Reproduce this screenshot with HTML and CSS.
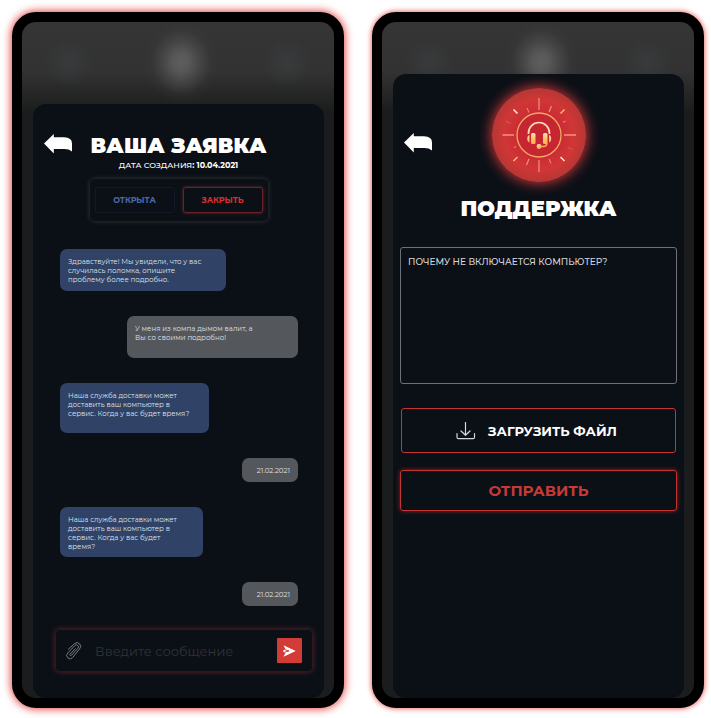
FILE: index.html
```html
<!DOCTYPE html>
<html lang="ru">
<head>
<meta charset="utf-8">
<meta name="viewport" content="width=device-width, initial-scale=1">
<title>Поддержка</title>
<link rel="stylesheet" href="styles.css">
</head>
<body>
<main class="screens">
  <section class="phone phone--ticket">
    <div class="sheet">
      <header class="head">
        <button class="back" type="button" aria-label="Назад">
          <svg class="back-icon" viewBox="0 0 28 20"><path d="M0 9.500 9.800 0v3.300h10.200q8 .2 8 6.200v8q-3-2.400-7.500-2.400H9.800v4.400z"/></svg>
        </button>
        <h1 class="title">ВАША ЗАЯВКА</h1>
      </header>
      <p class="created">ДАТА СОЗДАНИЯ<b>: 10.04.2021</b></p>
      <div class="status">
        <button class="status-button status-button--open" type="button">ОТКРЫТА</button>
        <button class="status-button status-button--close" type="button">ЗАКРЫТЬ</button>
      </div>
      <div class="chat">
        <p class="bubble bubble--greeting">Здравствуйте! Мы увидели, что у вас<br>случилась поломка, опишите<br>проблему более подробно.</p>
        <p class="bubble bubble--own">У меня из компа дымом валит, а<br>Вы со своими подробно!</p>
        <p class="bubble bubble--offer">Наша служба доставки может<br>доставить ваш компьютер в<br>сервис. Когда у вас будет время?</p>
        <p class="bubble bubble--own bubble--date">21.02.2021</p>
        <p class="bubble bubble--repeat">Наша служба доставки может<br>доставить ваш компьютер в<br>сервис. Когда у вас будет<br>время?</p>
        <p class="bubble bubble--own bubble--date">21.02.2021</p>
      </div>
      <form class="composer">
        <button class="attach" type="button" aria-label="Прикрепить файл">
          <svg class="attach-icon" viewBox="0 0 16 18"><path d="M2 7.500 8.600 1.700a3.600 3.600 0 0 1 5.200.3 3.700 3.700 0 0 1-.3 5L6.600 15.600a3.300 3.300 0 0 1-4.800.2 3.300 3.300 0 0 1-.1-4.700l7.200-7.600a2 2 0 0 1 3 2.700l-6.400 7.100a.9.900 0 0 1-1.400-1.200L9.400 6.500"/></svg>
        </button>
        <input class="composer-input" type="text" aria-label="Сообщение" placeholder="Введите сообщение">
        <button class="send" type="submit" aria-label="Отправить">
          <svg class="send-icon" viewBox="0 0 13 12"><path class="send-plane" d="M.5.300 12.700 6 .5 11.700 2.700 7.500.4 7V5l2.300-.5z"/><path class="send-fold" d="m2.200 4.900 3.800 1-3.800 1"/></svg>
        </button>
      </form>
    </div>
  </section>

  <section class="phone phone--support">
    <div class="sheet">
      <header class="head head--logo">
        <button class="back" type="button" aria-label="Назад">
          <svg class="back-icon" viewBox="0 0 28 20"><path d="M0 9.500 9.800 0v3.300h10.200q8 .2 8 6.200v8q-3-2.400-7.500-2.400H9.800v4.400z"/></svg>
        </button>
        <div class="badge">
          <svg class="badge-icon" viewBox="0 0 94 94">
            <defs>
              <linearGradient id="gold" x1="0" y1="0" x2="0" y2="1"><stop offset="0" stop-color="#ffe3bd"/><stop offset=".5" stop-color="#ffc36e"/><stop offset="1" stop-color="#ffb052"/></linearGradient>
            </defs>
            <circle cx="47" cy="47" r="22" fill="#c52632" stroke="#f5a861" stroke-width="1.300"/>
            <g fill="none" stroke="#f5b398" stroke-width="1.200">
              <path d="M47 10v12M47 72v12" stroke="#ee9282"/>
              <path d="M10.500 47H22M72 47h12" stroke="#ffc8a0"/>
              <path d="m21.500 21.500 4 4M68.500 69l4 4" stroke="#ffe6cc" stroke-width="1.600"/>
              <path d="m72.500 21.500-4 4M25.500 69l-4 4" stroke="#ffc06d" stroke-width="1.400"/>
              <path d="m59.500 18-2.500 6M37 71l-2.500 6" stroke="#f09870"/>
              <path d="m35 20 2 4.500M57 71l2 4.500M73.500 33l-2.500 1.500M24 58.500l-2 1.200" stroke="#e7835c"/>
              <path d="m13.500 33 5 2.500M75.500 59.500l5 2" stroke="#dc5950" stroke-width="1"/>
            </g>
            <path d="M36.500 46v-1a10.500 10.500 0 0 1 21 0v1" fill="none" stroke="#ffdcb4" stroke-width="1.700"/>
            <g fill="url(#gold)">
              <rect x="39" y="45" width="4.500" height="11" rx="1.500"/>
              <rect x="51" y="45" width="4.500" height="11" rx="1.500"/>
              <path d="M37.500 47v7.500c-3-.5-3-7 0-7.500M57 47v7.500c3-.5 3-7 0-7.500"/>
              <circle cx="47" cy="58.500" r="2.400"/>
            </g>
            <path d="M47 58.600h4.200q3.600 0 3.600-3.600" fill="none" stroke="#ffb052" stroke-width="1.500"/>
          </svg>
        </div>
      </header>
      <h1 class="title">ПОДДЕРЖКА</h1>
      <form class="request">
        <textarea class="question" aria-label="Вопрос">ПОЧЕМУ НЕ ВКЛЮЧАЕТСЯ КОМПЬЮТЕР?</textarea>
        <button class="action action--upload" type="button">
          <svg class="upload-icon" viewBox="0 0 20 18"><path d="M9.500.500v12.700M5 9l4.500 4.300L14 9M1 11.500v3.700q0 1.500 1.500 1.500h14.500q1.500 0 1.500-1.500v-3.700"/></svg>
          ЗАГРУЗИТЬ ФАЙЛ
        </button>
        <button class="action action--submit" type="submit">ОТПРАВИТЬ</button>
      </form>
    </div>
  </section>
</main>
</body>
</html>
```
FILE: styles.css
```css
:root {
  --sheet: #0b1017;
  --red: #d33b36;
  --blue: #304266;
  --grey: #54575c;
}

* {
  box-sizing: border-box;
}

body {
  margin: 0;
  background: #fff;
  color: #fff;
  font-family: Montserrat, Inter, "Liberation Sans", sans-serif;
}

h1,
p {
  margin: 0;
}

button,
input,
textarea {
  margin: 0;
  padding: 0;
  border: 0;
  background: none;
  color: inherit;
  font: inherit;
}

svg {
  display: block;
}

.screens {
  display: grid;
  grid-template-columns: repeat(2, minmax(0, 1fr));
  gap: 28px;
  min-height: 100vh;
  padding: 12px 7px 10px 12px;
}

.phone {
  display: flex;
  flex-direction: column;
  padding: 0 10px 0 11px;
  border: 10px solid #000;
  border-radius: 24px;
  background:
    radial-gradient(ellipse 38px 42px at 51% 40px, #5e5e5e, #5a5a5aee 22%, #50505099 50%, #40404033 78%, #34353400),
    radial-gradient(circle 25px at 15% 40px, #393a3c, #393a3c00),
    radial-gradient(circle 25px at 85% 40px, #393a3c, #393a3c00),
    linear-gradient(#343534, #313231 50px, #1b1c1d 90px);
  background-color: #1b1c1d;
}

.phone--ticket {
  padding-top: 82px;
  box-shadow: 0 0 8px 1px #e0433f;
}

.phone--support {
  padding-top: 52px;
  box-shadow: 0 0 5px 1px #ea716d;
}

.sheet {
  display: flex;
  flex: 1;
  flex-direction: column;
  border-radius: 13px;
  background: var(--sheet);
}

.head {
  display: grid;
  grid-template-columns: 28px 1fr 28px;
  align-items: center;
  padding: 29px 11px 0;
}

.head--logo {
  padding-top: 14px;
}

.head .back {
  padding-bottom: 5px;
}

.head--logo .back {
  padding: 15px 0 0;
}

.back-icon {
  width: 28px;
  height: 20px;
  fill: #fff;
}

.title {
  font-size: 21px;
  font-weight: 900;
  line-height: 26px;
  text-align: center;
  white-space: nowrap;
}

.created {
  font-size: 8px;
  font-weight: 500;
  line-height: 13px;
  text-align: center;
}

.status {
  display: flex;
  align-items: center;
  gap: 8px;
  align-self: center;
  margin-top: 6px;
  padding: 8px 5px;
  border: 1px solid #1c1f24;
  border-radius: 6px;
  box-shadow: 0 0 4px #2a2a2d;
}

.status-button {
  width: 80px;
  height: 26px;
  border: 1px solid #111b28;
  border-radius: 3px;
  font-size: 8px;
  font-weight: 700;
}

.status-button--open {
  color: #4a69aa;
}

.status-button--close {
  border-color: #6b2226;
  box-shadow: 0 0 3px #7d2628;
  color: #d92f2f;
}

.chat {
  display: flex;
  flex-direction: column;
  align-items: flex-start;
  gap: 25px;
  padding: 27px 26px 0 27px;
}

.bubble {
  min-height: 42px;
  padding: 8px 8px 6px;
  border-radius: 7px;
  background: var(--blue);
  color: #dde1e8;
  font-size: 7px;
  line-height: 9px;
  white-space: nowrap;
}

.bubble--greeting {
  width: 166px;
}

.bubble--offer {
  width: 149px;
  min-height: 50px;
}

.bubble--repeat {
  width: 143px;
  min-height: 50px;
}

.bubble--own {
  width: 171px;
  align-self: flex-end;
  background: var(--grey);
}

.bubble--date {
  width: 56px;
  min-height: 24px;
  text-align: right;
}

.composer {
  display: flex;
  align-items: center;
  margin: 23px 11px 26px 22px;
  padding: 8px 10px;
  border: 1px solid #31161b;
  border-radius: 5px;
  box-shadow: 0 0 5px #64212a;
}

.attach-icon {
  width: 16px;
  height: 18px;
  fill: none;
  stroke: #77797c;
  stroke-width: 1;
}

.composer-input {
  flex: 1;
  min-width: 0;
  margin-left: 13px;
  font-size: 13px;
  outline: 0;
}

.composer-input::placeholder {
  color: #303236;
  opacity: 1;
}

.send {
  display: grid;
  place-items: center;
  width: 25px;
  height: 25px;
  border-radius: 1px;
  background: var(--red);
}

.send-icon {
  width: 13px;
  height: 12px;
}

.send-plane {
  fill: #fff;
}

.send-fold {
  fill: none;
  stroke: var(--red);
  stroke-width: 1;
}

.badge {
  justify-self: center;
  width: 94px;
  height: 94px;
  border-radius: 50%;
  background: radial-gradient(circle closest-side, #cb2b35 45%, #d03636 75%, #b63734);
  box-shadow: 0 0 13px 1px #d6393a;
}

.phone--support .title {
  margin-top: 14px;
}

.request {
  display: flex;
  flex-direction: column;
  padding: 25px 7px 0;
}

.question {
  height: 137px;
  padding: 7px;
  border: 1px solid #6e7175;
  border-radius: 3px;
  color: #d5d7d9;
  font-size: 9px;
  font-weight: 500;
  line-height: 14px;
  resize: none;
}

.action {
  display: flex;
  align-items: center;
  justify-content: center;
  border: 1px solid #c43431;
  border-radius: 3px;
  font-weight: 700;
}

.action--upload {
  gap: 12px;
  height: 45px;
  margin: 24px 1px 0;
  padding-right: 4px;
  font-size: 13px;
}

.action--submit {
  height: 41px;
  margin-top: 17px;
  box-shadow: 0 0 4px #8e2528;
  color: #c73a36;
  font-size: 15px;
}

.upload-icon {
  width: 20px;
  height: 18px;
  fill: none;
  stroke: #d5d7d9;
  stroke-width: 1.200;
  stroke-linecap: round;
  stroke-linejoin: round;
}
```
